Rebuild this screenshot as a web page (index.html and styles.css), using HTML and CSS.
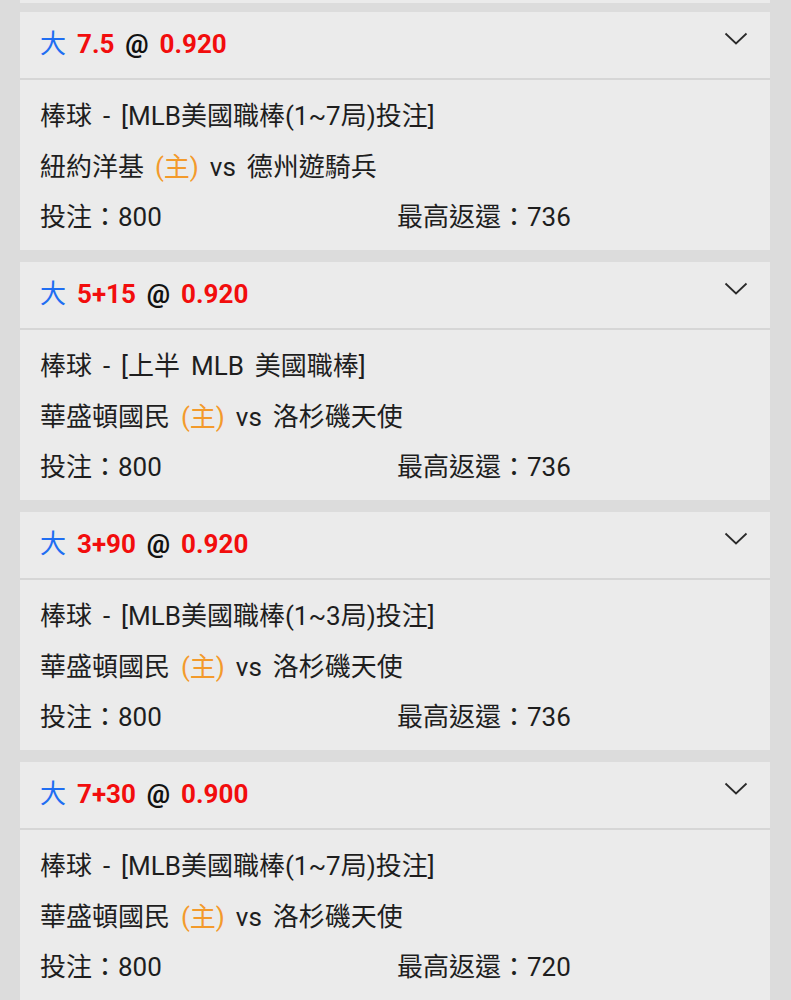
FILE: index.html
```html
<!DOCTYPE html>
<html lang="zh-Hant">
<head>
<meta charset="utf-8">
<link rel="stylesheet" href="styles.css">
</head>
<body>
<div class="list">
  <div class="card card-partial"></div>

  <div class="card">
    <div class="head">
      <div class="title"><span class="ou">大</span> <span class="num">7.5</span> <span class="at">@</span> <span class="num">0.920</span></div>
      <svg class="chev" width="24" height="14" viewBox="0 0 24 14"><path d="M1.5 1.5 L12 11.5 L22.5 1.5" fill="none" stroke="#2a2a2a" stroke-width="1.8"/></svg>
    </div>
    <div class="body">
      <div class="line">棒球 - [MLB美國職棒(1~7局)投注]</div>
      <div class="line">紐約洋基 <span class="home">(主)</span> vs 德州遊騎兵</div>
      <div class="line row"><span>投注：800</span><span>最高返還：736</span></div>
    </div>
  </div>

  <div class="card">
    <div class="head">
      <div class="title"><span class="ou">大</span> <span class="num">5+15</span> <span class="at">@</span> <span class="num">0.920</span></div>
      <svg class="chev" width="24" height="14" viewBox="0 0 24 14"><path d="M1.5 1.5 L12 11.5 L22.5 1.5" fill="none" stroke="#2a2a2a" stroke-width="1.8"/></svg>
    </div>
    <div class="body">
      <div class="line">棒球 - [上半 MLB 美國職棒]</div>
      <div class="line">華盛頓國民 <span class="home">(主)</span> vs 洛杉磯天使</div>
      <div class="line row"><span>投注：800</span><span>最高返還：736</span></div>
    </div>
  </div>

  <div class="card">
    <div class="head">
      <div class="title"><span class="ou">大</span> <span class="num">3+90</span> <span class="at">@</span> <span class="num">0.920</span></div>
      <svg class="chev" width="24" height="14" viewBox="0 0 24 14"><path d="M1.5 1.5 L12 11.5 L22.5 1.5" fill="none" stroke="#2a2a2a" stroke-width="1.8"/></svg>
    </div>
    <div class="body">
      <div class="line">棒球 - [MLB美國職棒(1~3局)投注]</div>
      <div class="line">華盛頓國民 <span class="home">(主)</span> vs 洛杉磯天使</div>
      <div class="line row"><span>投注：800</span><span>最高返還：736</span></div>
    </div>
  </div>

  <div class="card">
    <div class="head">
      <div class="title"><span class="ou">大</span> <span class="num">7+30</span> <span class="at">@</span> <span class="num">0.900</span></div>
      <svg class="chev" width="24" height="14" viewBox="0 0 24 14"><path d="M1.5 1.5 L12 11.5 L22.5 1.5" fill="none" stroke="#2a2a2a" stroke-width="1.8"/></svg>
    </div>
    <div class="body">
      <div class="line">棒球 - [MLB美國職棒(1~7局)投注]</div>
      <div class="line">華盛頓國民 <span class="home">(主)</span> vs 洛杉磯天使</div>
      <div class="line row"><span>投注：800</span><span>最高返還：720</span></div>
    </div>
  </div>
</div>
</body>
</html>
```
FILE: styles.css
```css
html, body {
  margin: 0;
  padding: 0;
  background: #dcdcdc;
  height: 1000px;
  overflow: hidden;
}
body {
  font-family: Roboto, "Noto Sans CJK TC", sans-serif;
  color: #1e1e1e;
  font-size: 26px;
  word-spacing: 4.5px;
}
.list {
  display: flex;
  flex-direction: column;
  gap: 12px;
  padding: 0 21px 0 20px;
}
.card {
  background: #ebebeb;
}
.card-partial {
  height: 3px;
  margin-bottom: -3px;
}
.head {
  height: 66px;
  display: flex;
  align-items: center;
  justify-content: space-between;
  padding: 0 22px 0 20px;
  border-bottom: 2px solid #d6d6d6;
}
.title {
  font-size: 26px;
  line-height: 30px;
  white-space: pre;
  margin-top: -3px;
}
.ou { color: #1f6ef2; }
.num { color: #f20d0d; font-weight: bold; }
.at { color: #111; font-weight: bold; }
.chev {
  margin-top: -12px;
}
.body {
  height: 170px;
  padding: 11px 20px 0 20px;
  box-sizing: border-box;
}
.line {
  height: 50.5px;
  line-height: 50px;
  white-space: nowrap;
}
.row {
  display: grid;
  grid-template-columns: 357px 1fr;
}
.home { color: #f39a2b; }
```
